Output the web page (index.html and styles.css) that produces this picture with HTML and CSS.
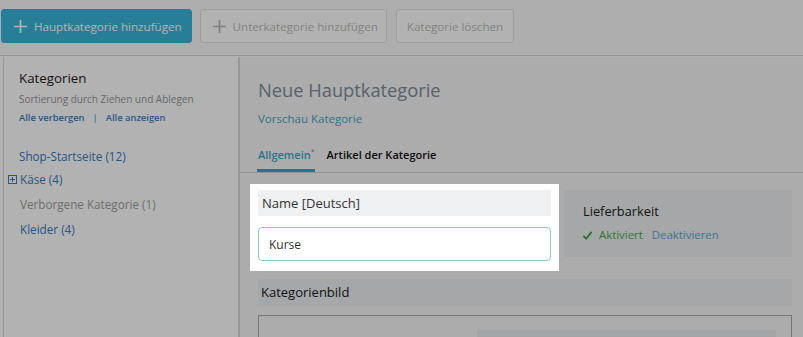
FILE: index.html
```html
<!DOCTYPE html>
<html lang="de">
<head>
<meta charset="utf-8">
<title>Kategorien</title>
<link rel="stylesheet" href="styles.css">
</head>
<body>
<div class="toolbar">
  <button class="btn btn-primary"><svg class="plus" viewBox="0 0 16 16"><path d="M8 1v14M1 8h14"/></svg>Hauptkategorie hinzufügen</button>
  <button class="btn btn-disabled"><svg class="plus" viewBox="0 0 16 16"><path d="M8 1v14M1 8h14"/></svg>Unterkategorie hinzufügen</button>
  <button class="btn btn-disabled btn-text">Kategorie löschen</button>
</div>
<div class="layout">
  <aside class="sidebar">
    <div class="side-title">Kategorien</div>
    <div class="side-hint">Sortierung durch Ziehen und Ablegen</div>
    <div class="side-actions"><a>Alle verbergen</a><span class="sep">|</span><a>Alle anzeigen</a></div>
    <ul class="tree">
      <li class="tree-item root">Shop-Startseite (12)</li>
      <li class="tree-item"><svg class="expander" viewBox="0 0 9 9"><rect x="0.5" y="0.5" width="8" height="8"/><path d="M2 4.5h5M4.5 2v5"/></svg>Käse (4)</li>
      <li class="tree-item hidden-cat">Verborgene Kategorie (1)</li>
      <li class="tree-item">Kleider (4)</li>
    </ul>
  </aside>
  <main class="main">
    <div class="main-head">
      <h1 class="page-title">Neue Hauptkategorie</h1>
      <a class="preview">Vorschau Kategorie</a>
      <nav class="tabs">
        <span class="tab active">Allgemein<sup>*</sup></span>
        <span class="tab">Artikel der Kategorie</span>
      </nav>
    </div>
    <div class="content">
      <div class="form-row">
        <div class="highlight">
          <div class="field-label">Name [Deutsch]</div>
          <input class="field-input" type="text" value="Kurse">
        </div>
        <div class="card">
          <div class="card-title">Lieferbarkeit</div>
          <div class="card-status">
            <svg class="check" viewBox="0 0 12 12"><path d="M1.5 6.5l3 3 6-7.5"/></svg>
            <span class="active-text">Aktiviert</span>
            <a class="deactivate">Deaktivieren</a>
          </div>
        </div>
      </div>
      <div class="section-bar">Kategorienbild</div>
      <div class="image-box"><div class="image-drop"></div></div>
    </div>
  </main>
</div>
</body>
</html>
```

FILE: styles.css
```css
* { box-sizing: border-box; }
html, body { margin: 0; padding: 0; }
html { overflow: hidden; }
body {
  font-family: "Open Sans", "Noto Sans", sans-serif;
  color: #222;
  background: #fff;
  width: 803px;
  height: 337px;
}

.toolbar {
  height: 56px;
  background: #fafafa;
  border-bottom: 1px solid #d9d9d9;
  padding: 9px 0 0 1px;
  display: flex;
  gap: 8px;
}
.btn {
  height: 34px;
  display: flex;
  align-items: center;
  gap: 6px;
  font-family: inherit;
  font-size: 11.6px;
  border-radius: 3px;
  padding: 0 9px 0 11px;
  cursor: pointer;
}
.btn-primary {
  background: #3cb5d8;
  color: #fff;
  border: 1px solid #3cb5d8;
}
.btn-disabled {
  background: #fff;
  color: #bcbcbc;
  border: 1px solid #e2e2e2;
  padding-right: 8px;
}
.btn-text { padding: 0 10px; }
.btn-disabled + .btn-disabled { margin-left: 1px; }
.plus { width: 15px; height: 15px; fill: none; stroke: currentColor; stroke-width: 1.8; }
.btn-primary .plus { stroke: #fff; }
.btn-disabled .plus { stroke: #b8b8b8; }

.layout {
  display: flex;
  height: 281px;
}
.sidebar {
  width: 236px;
  margin: 1px 0 0 3px;
  border-left: 1px solid #dadada;
  border-right: 1px solid #d4d4d4;
  background: #fff;
  padding: 11px 0 0 15px;
}
.side-title { font-size: 13.3px; line-height: 20px; color: #1c1c1c; }
.side-hint { font-size: 10px; line-height: 16px; color: #969696; margin-top: 3px; }
.side-actions { font-size: 9.4px; line-height: 16px; margin-top: 3px; font-weight: 600; }
.side-actions a { color: #3a7fc4; }
.side-actions .sep { color: #3a7fc4; margin: 0 8px; font-weight: 400; }
.tree { list-style: none; margin: 20px 0 0; padding: 0; }
.tree-item {
  font-size: 11.7px;
  line-height: 20px;
  color: #3a7bbf;
  display: flex;
  align-items: center;
  margin-top: 3px;
  margin-left: 1px;
}
.tree-item.root { margin-left: 0; margin-top: 0; }
.tree-item.hidden-cat { color: #a0a0a0; margin-top: 5px; }
.tree-item:last-child { margin-top: 5px; }
.expander {
  width: 9px; height: 9px;
  margin-left: -12px; margin-right: 3px;
  fill: none; stroke: #3a7bbf; stroke-width: 1;
}

.main {
  flex: 1;
  background: #f7f7f7;
  border-left: 1px solid #dcdcdc;
  margin-top: 1px;
}
.main-head {
  padding: 20px 0 0 17px;
  border-bottom: 1px solid #d2d2d2;
}
.page-title {
  margin: 0 0 0 1px;
  font-size: 18.3px;
  line-height: 26px;
  font-weight: 400;
  color: #7d8d9a;
}
.preview {
  display: block;
  margin: 7px 0 0 1px;
  font-size: 11.5px;
  line-height: 18px;
  color: #47a5c6;
}
.tabs { display: flex; gap: 12px; margin-top: 18px; }
.tab {
  font-size: 11px;
  line-height: 18px;
  font-weight: 600;
  color: #111;
  padding-bottom: 5px;
  border-bottom: 3px solid transparent;
}
.tab.active { color: #3ba5c8; border-bottom-color: #3ba5c8; padding-left: 1px; }
.tab sup { font-size: 7px; line-height: 0; color: #8ab; }

.content { padding: 17px 11px 0 18px; }
.form-row {
  display: grid;
  grid-template-columns: 293px 1fr;
  column-gap: 13px;
  align-items: start;
}
.highlight {
  position: relative;
  z-index: 5;
  background: #fff;
  padding: 6px 8px 10px;
  margin: -6px -8px -10px;
  box-shadow: 0 0 0 2000px rgba(0, 0, 0, 0.3);
}
.field-label {
  background: #eff0f2;
  height: 26px;
  line-height: 26px;
  padding-left: 4px;
  font-size: 13px;
  color: #333;
}
.field-input {
  display: block;
  width: 100%;
  height: 34px;
  margin-top: 11px;
  border: 1.5px solid #8cc6d2;
  border-radius: 4px;
  padding: 0 10px;
  font-family: inherit;
  font-size: 12px;
  color: #333;
  background: #fff;
  outline: none;
}
.card {
  background: #eceff2;
  height: 67px;
  padding: 11px 0 0 19px;
}
.card-title { font-size: 12.8px; line-height: 20px; color: #1a1a1a; }
.card-status {
  display: flex;
  align-items: center;
  margin-top: 5px;
  font-size: 11.4px;
  line-height: 18px;
}
.check { width: 11px; height: 11px; fill: none; stroke: #3f9f3f; stroke-width: 2; margin: 0 6px 0 -1px; }
.active-text { color: #4aab4a; margin-right: 9px; }
.deactivate { color: #5aaad0; }

.section-bar {
  margin-top: 18px;
  background: #eceff2;
  height: 27px;
  line-height: 27px;
  padding-left: 3px;
  font-size: 13px;
  color: #1a1a1a;
}
.image-box {
  margin-top: 9px;
  height: 22px;
  border: 1px solid #a9a9a9;
  border-bottom: none;
  background: #f7f7f7;
  padding: 14px 15px 0 218px;
}
.image-drop { height: 7px; background: #e8ebee; }
```
